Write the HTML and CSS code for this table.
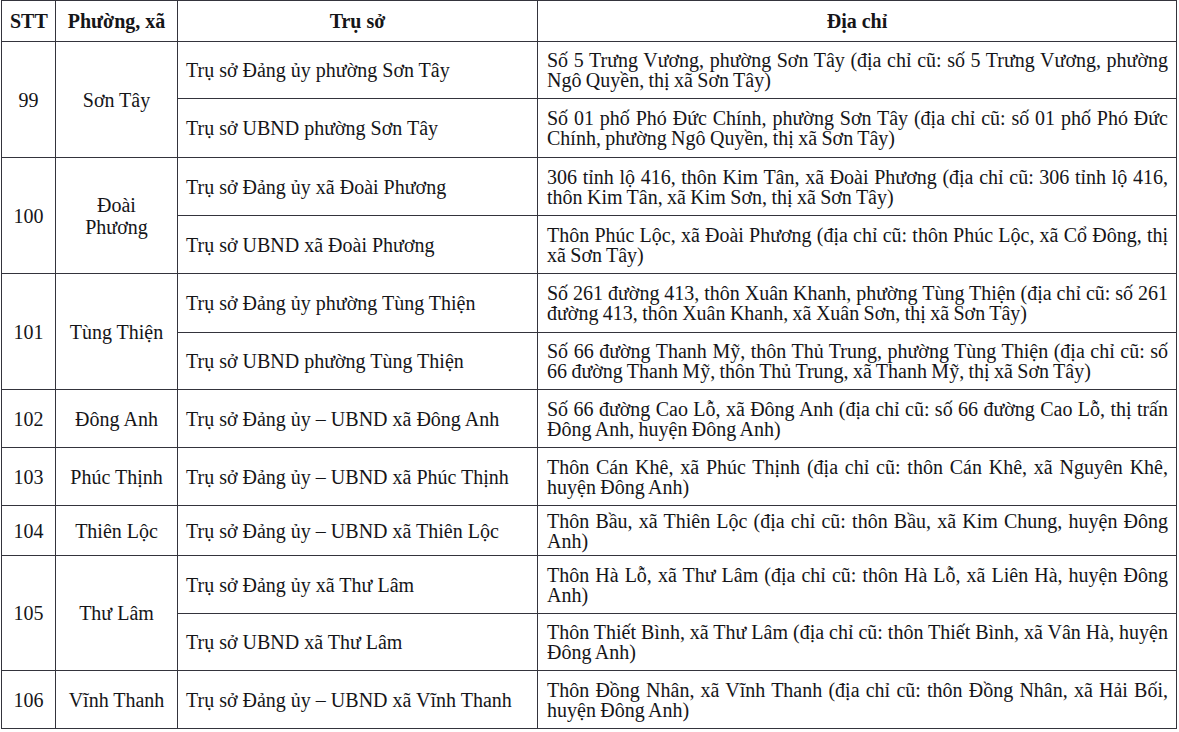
FILE: index.html
```html
<!DOCTYPE html>
<html lang="vi">
<head>
<meta charset="utf-8">
<title>Danh sách trụ sở</title>
<link rel="stylesheet" href="styles.css">
</head>
<body>
<table class="tbl">
  <colgroup>
    <col class="c-stt">
    <col class="c-px">
    <col class="c-ts">
    <col class="c-dc">
  </colgroup>
  <thead>
    <tr class="r-head">
      <th>STT</th>
      <th>Phường, xã</th>
      <th>Trụ sở</th>
      <th>Địa chỉ</th>
    </tr>
  </thead>
  <tbody>
    <tr class="r57">
      <td class="ctr" rowspan="2">99</td>
      <td class="ctr" rowspan="2">Sơn Tây</td>
      <td class="ts">Trụ sở Đảng ủy phường Sơn Tây</td>
      <td class="dc">Số 5 Trưng Vương, phường Sơn Tây (địa chỉ cũ: số 5 Trưng Vương, phường Ngô Quyền, thị xã Sơn Tây)</td>
    </tr>
    <tr class="r59">
      <td class="ts">Trụ sở UBND phường Sơn Tây</td>
      <td class="dc">Số 01 phố Phó Đức Chính, phường Sơn Tây (địa chỉ cũ: số 01 phố Phó Đức Chính, phường Ngô Quyền, thị xã Sơn Tây)</td>
    </tr>
    <tr class="r58">
      <td class="ctr" rowspan="2">100</td>
      <td class="ctr" rowspan="2"><span class="ln">Đoài</span><span class="ln">Phương</span></td>
      <td class="ts">Trụ sở Đảng ủy xã Đoài Phương</td>
      <td class="dc">306 tỉnh lộ 416, thôn Kim Tân, xã Đoài Phương (địa chỉ cũ: 306 tỉnh lộ 416, thôn Kim Tân, xã Kim Sơn, thị xã Sơn Tây)</td>
    </tr>
    <tr class="r58">
      <td class="ts">Trụ sở UBND xã Đoài Phương</td>
      <td class="dc">Thôn Phúc Lộc, xã Đoài Phương (địa chỉ cũ: thôn Phúc Lộc, xã Cổ Đông, thị xã Sơn Tây)</td>
    </tr>
    <tr class="r59">
      <td class="ctr" rowspan="2">101</td>
      <td class="ctr" rowspan="2">Tùng Thiện</td>
      <td class="ts">Trụ sở Đảng ủy phường Tùng Thiện</td>
      <td class="dc">Số 261 đường 413, thôn Xuân Khanh, phường Tùng Thiện (địa chỉ cũ: số 261 đường 413, thôn Xuân Khanh, xã Xuân Sơn, thị xã Sơn Tây)</td>
    </tr>
    <tr class="r57">
      <td class="ts">Trụ sở UBND phường Tùng Thiện</td>
      <td class="dc">Số 66 đường Thanh Mỹ, thôn Thủ Trung, phường Tùng Thiện (địa chỉ cũ: số 66 đường Thanh Mỹ, thôn Thủ Trung, xã Thanh Mỹ, thị xã Sơn Tây)</td>
    </tr>
    <tr class="r58">
      <td class="ctr">102</td>
      <td class="ctr">Đông Anh</td>
      <td class="ts">Trụ sở Đảng ủy – UBND xã Đông Anh</td>
      <td class="dc">Số 66 đường Cao Lỗ, xã Đông Anh (địa chỉ cũ: số 66 đường Cao Lỗ, thị trấn Đông Anh, huyện Đông Anh)</td>
    </tr>
    <tr class="r58">
      <td class="ctr">103</td>
      <td class="ctr">Phúc Thịnh</td>
      <td class="ts">Trụ sở Đảng ủy – UBND xã Phúc Thịnh</td>
      <td class="dc">Thôn Cán Khê, xã Phúc Thịnh (địa chỉ cũ: thôn Cán Khê, xã Nguyên Khê, huyện Đông Anh)</td>
    </tr>
    <tr class="r50">
      <td class="ctr">104</td>
      <td class="ctr">Thiên Lộc</td>
      <td class="ts">Trụ sở Đảng ủy – UBND xã Thiên Lộc</td>
      <td class="dc">Thôn Bầu, xã Thiên Lộc (địa chỉ cũ: thôn Bầu, xã Kim Chung, huyện Đông Anh)</td>
    </tr>
    <tr class="r58">
      <td class="ctr" rowspan="2">105</td>
      <td class="ctr" rowspan="2">Thư Lâm</td>
      <td class="ts">Trụ sở Đảng ủy xã Thư Lâm</td>
      <td class="dc">Thôn Hà Lỗ, xã Thư Lâm (địa chỉ cũ: thôn Hà Lỗ, xã Liên Hà, huyện Đông Anh)</td>
    </tr>
    <tr class="r57">
      <td class="ts">Trụ sở UBND xã Thư Lâm</td>
      <td class="dc">Thôn Thiết Bình, xã Thư Lâm (địa chỉ cũ: thôn Thiết Bình, xã Vân Hà, huyện Đông Anh)</td>
    </tr>
    <tr class="r58">
      <td class="ctr">106</td>
      <td class="ctr">Vĩnh Thanh</td>
      <td class="ts">Trụ sở Đảng ủy – UBND xã Vĩnh Thanh</td>
      <td class="dc">Thôn Đồng Nhân, xã Vĩnh Thanh (địa chỉ cũ: thôn Đồng Nhân, xã Hải Bối, huyện Đông Anh)</td>
    </tr>
  </tbody>
</table>
</body>
</html>
```

FILE: styles.css
```css
html, body {
  margin: 0;
  padding: 0;
  background: #ffffff;
}

body {
  padding: 0 3px 0 1px;
  font-family: "Liberation Serif", "Times New Roman", serif;
  font-size: 20px;
  line-height: 20px;
  color: #151518;
}

.tbl {
  border-collapse: collapse;
  table-layout: fixed;
  width: 1175px;
}

.c-stt { width: 54px; }
.c-px { width: 122px; }
.c-ts { width: 360px; }
.c-dc { width: 639px; }

.tbl th,
.tbl td {
  border: 1px solid #34343c;
  padding: 0 8px;
  vertical-align: middle;
  box-sizing: border-box;
}

.tbl th {
  font-weight: bold;
  text-align: center;
}

.r-head { height: 41px; }
.r50 { height: 50px; }
.r57 { height: 57px; }
.r58 { height: 58px; }
.r59 { height: 59px; }

.ctr {
  text-align: center;
  padding: 0 4px;
}

.ln {
  display: block;
  line-height: 22px;
}

.ts {
  text-align: left;
}

.tbl td.dc {
  text-align: justify;
  padding: 0 8px 0 9px;
  word-spacing: -0.6px;
}
```
